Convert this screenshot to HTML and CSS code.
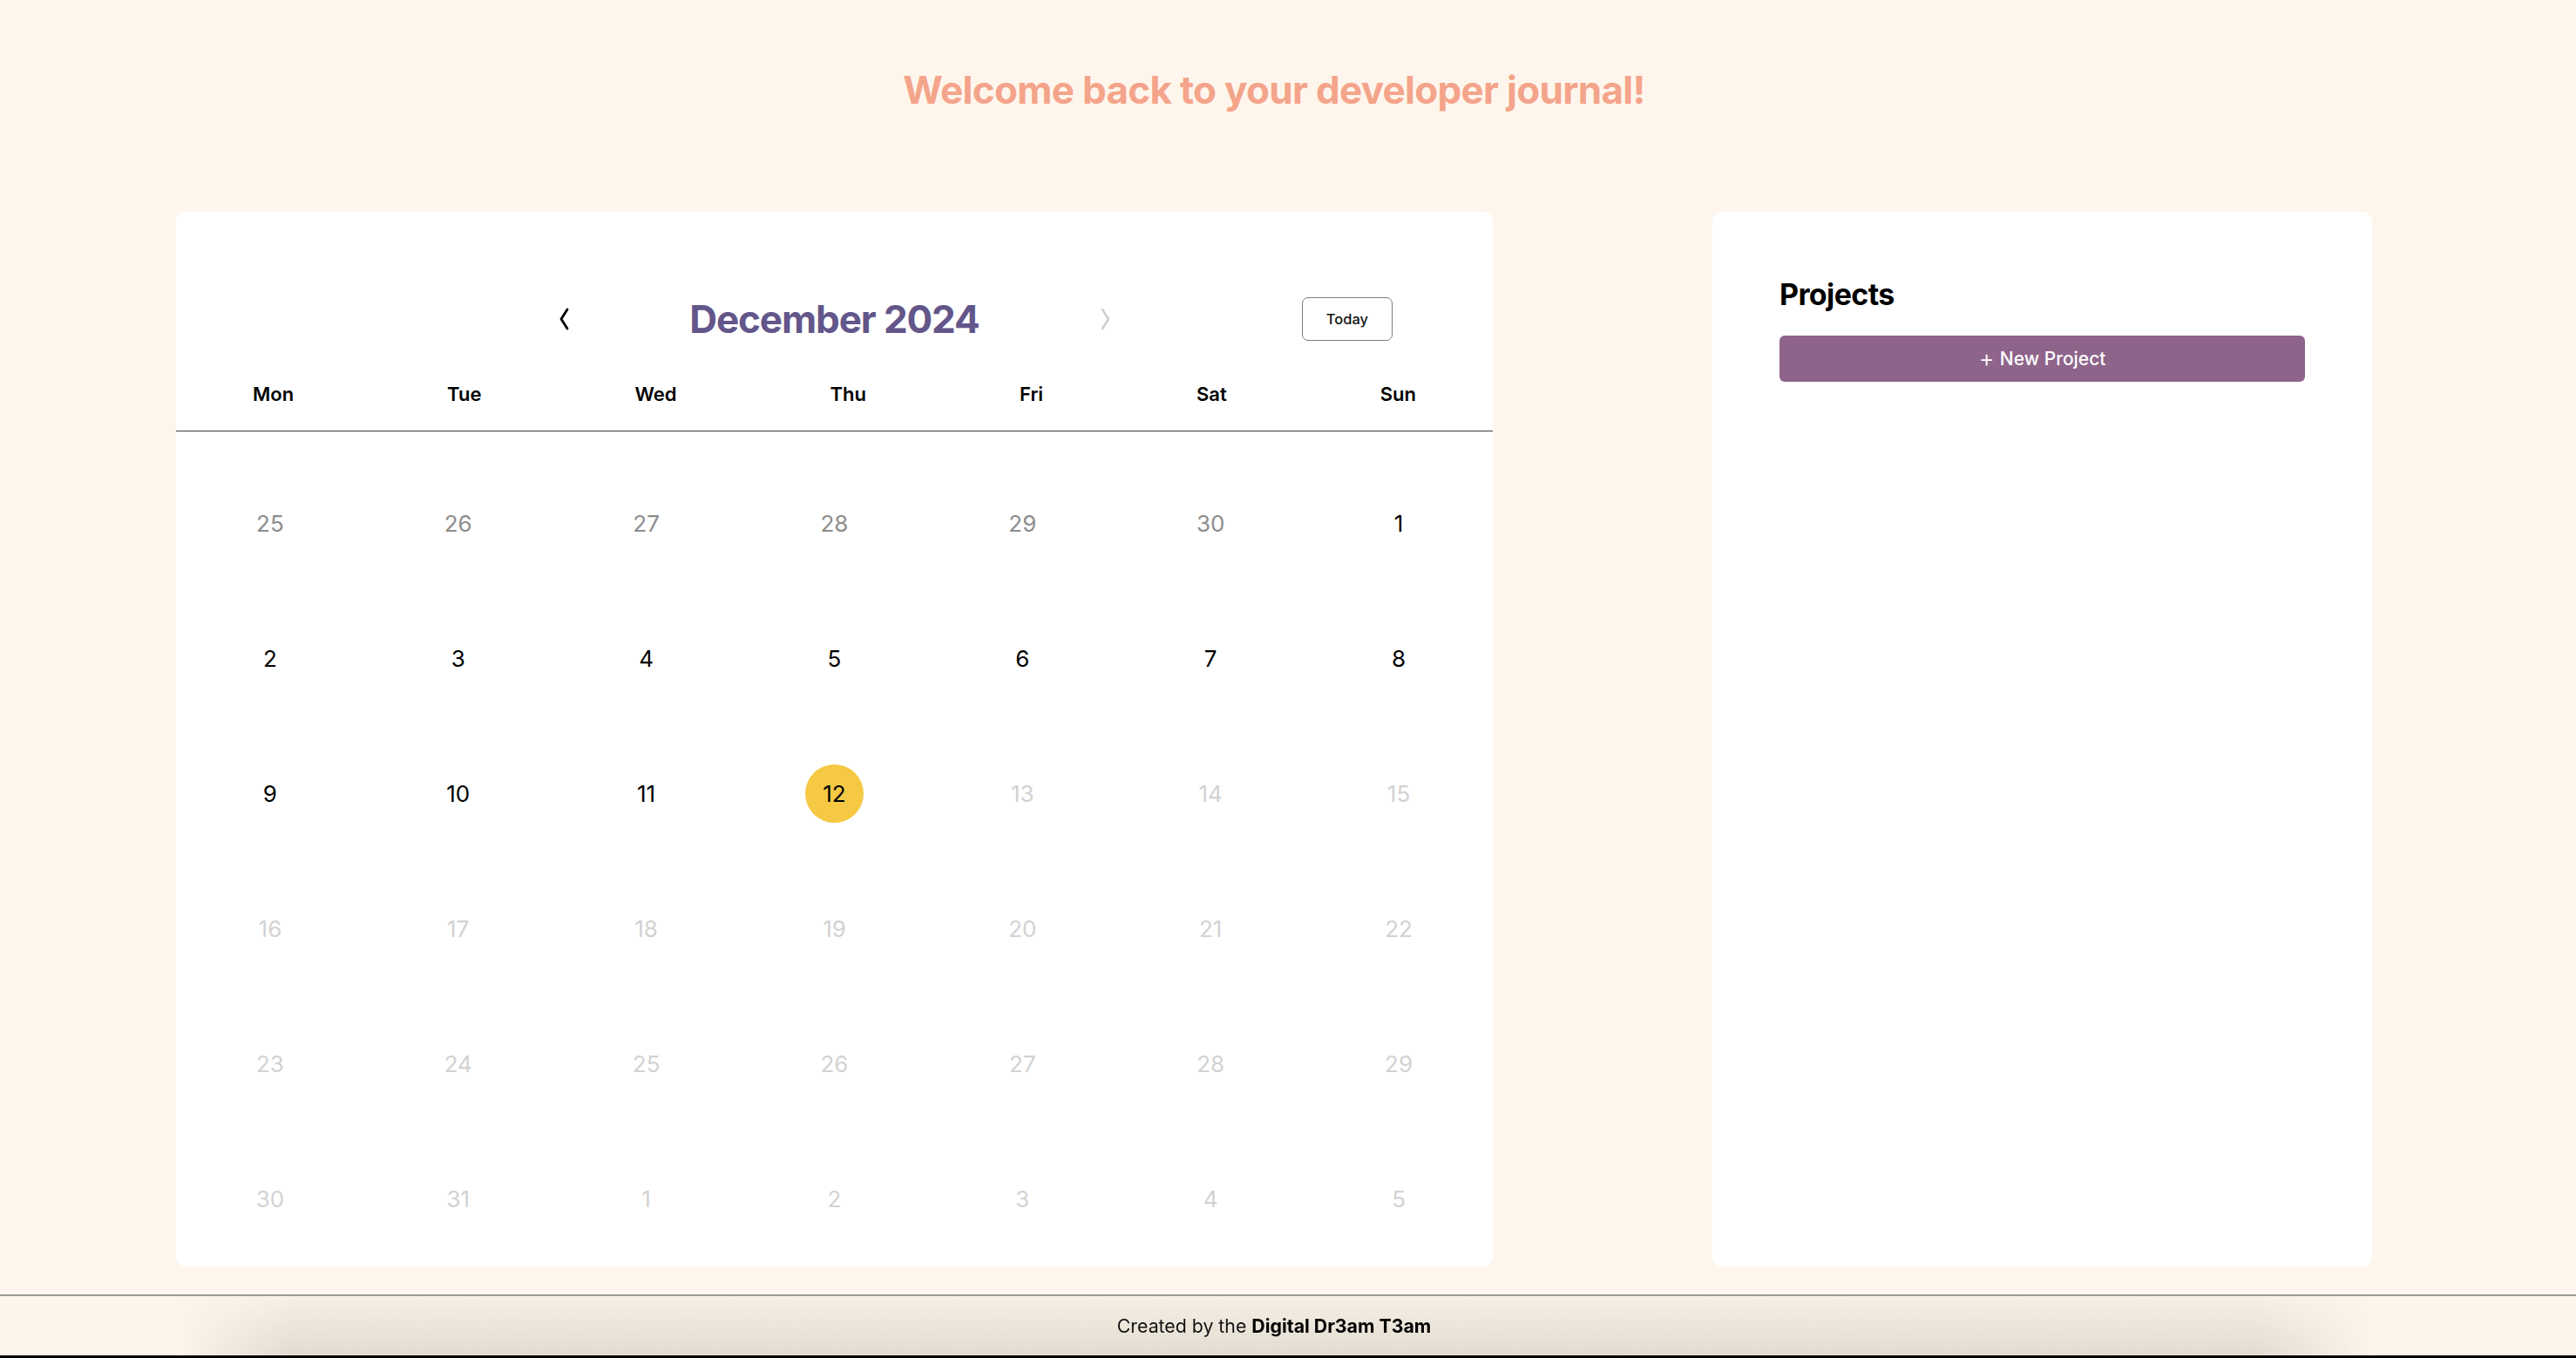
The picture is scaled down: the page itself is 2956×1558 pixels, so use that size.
FILE: index.html
```html
<!DOCTYPE html>
<html lang="en">
<head>
<meta charset="utf-8">
<title>Developer Journal</title>
<link rel="stylesheet" href="styles.css">
</head>
<body>
<header class="page-header">
  <h1 class="welcome">Welcome back to your developer journal!</h1>
</header>
<main class="layout">
  <section class="card calendar">
    <div class="cal-head">
      <div class="cal-nav">
        <button class="nav-btn prev" aria-label="Previous month">
          <svg width="16" height="28" viewBox="0 0 16 28"><polyline points="11,3 4,14 11,25" fill="none" stroke="#000" stroke-width="2.8" stroke-linecap="round" stroke-linejoin="round"/></svg>
        </button>
        <h2 class="month">December 2024</h2>
        <button class="nav-btn next" aria-label="Next month">
          <svg width="16" height="28" viewBox="0 0 16 28"><polyline points="5,3 12,14 5,25" fill="none" stroke="#cdcdcd" stroke-width="2.4" stroke-linecap="round" stroke-linejoin="round"/></svg>
        </button>
      </div>
      <div class="today-wrap"><button class="today-btn">Today</button></div>
    </div>
    <div class="weekdays">
      <span>Mon</span><span>Tue</span><span>Wed</span><span>Thu</span><span>Fri</span><span>Sat</span><span>Sun</span>
    </div>
    <div class="days">
      <div class="day other"><span>25</span></div>
      <div class="day other"><span>26</span></div>
      <div class="day other"><span>27</span></div>
      <div class="day other"><span>28</span></div>
      <div class="day other"><span>29</span></div>
      <div class="day other"><span>30</span></div>
      <div class="day"><span>1</span></div>
      <div class="day"><span>2</span></div>
      <div class="day"><span>3</span></div>
      <div class="day"><span>4</span></div>
      <div class="day"><span>5</span></div>
      <div class="day"><span>6</span></div>
      <div class="day"><span>7</span></div>
      <div class="day"><span>8</span></div>
      <div class="day"><span>9</span></div>
      <div class="day"><span>10</span></div>
      <div class="day"><span>11</span></div>
      <div class="day today"><span>12</span></div>
      <div class="day future"><span>13</span></div>
      <div class="day future"><span>14</span></div>
      <div class="day future"><span>15</span></div>
      <div class="day future"><span>16</span></div>
      <div class="day future"><span>17</span></div>
      <div class="day future"><span>18</span></div>
      <div class="day future"><span>19</span></div>
      <div class="day future"><span>20</span></div>
      <div class="day future"><span>21</span></div>
      <div class="day future"><span>22</span></div>
      <div class="day future"><span>23</span></div>
      <div class="day future"><span>24</span></div>
      <div class="day future"><span>25</span></div>
      <div class="day future"><span>26</span></div>
      <div class="day future"><span>27</span></div>
      <div class="day future"><span>28</span></div>
      <div class="day future"><span>29</span></div>
      <div class="day future"><span>30</span></div>
      <div class="day future"><span>31</span></div>
      <div class="day future"><span>1</span></div>
      <div class="day future"><span>2</span></div>
      <div class="day future"><span>3</span></div>
      <div class="day future"><span>4</span></div>
      <div class="day future"><span>5</span></div>
    </div>
  </section>
  <aside class="card projects">
    <h2 class="projects-title">Projects</h2>
    <button class="new-project"><span class="plus">+</span>New Project</button>
  </aside>
</main>
<footer class="footer">
  <div class="footer-shade">
    <p class="credit">Created by the <strong>Digital Dr3am T3am</strong></p>
  </div>
</footer>
</body>
</html>
```

FILE: styles.css
```css
* { box-sizing: border-box; }

html, body {
  margin: 0;
  padding: 0;
}

body {
  background: #fef6ec;
  font-family: Inter, "Noto Sans", "Liberation Sans", sans-serif;
  color: #000;
  height: 1558px;
  overflow: hidden;
  display: flex;
  flex-direction: column;
}

.page-header {
  padding-top: 81px;
  margin-bottom: 118px;
  text-align: center;
  padding-right: 32px;
}

.welcome {
  margin: 0;
  font-size: 44px;
  line-height: 44px;
  font-weight: 700;
  color: #f4a48a;
  letter-spacing: -0.7px;
}

.layout {
  display: grid;
  grid-template-columns: 1511px 757px;
  column-gap: 252px;
  padding-left: 202px;
  align-items: stretch;
  margin-bottom: 32px;
}

.card {
  background: #ffffff;
  border-radius: 11px;
}

/* Calendar */
.calendar {
  padding-top: 98px;
}

.cal-head {
  display: grid;
  grid-template-columns: 1fr 636px 1fr;
  align-items: center;
  height: 50px;
}

.cal-nav {
  grid-column: 2;
  display: flex;
  justify-content: space-between;
  align-items: center;
}

.nav-btn {
  background: none;
  border: none;
  padding: 0;
  width: 16px;
  height: 28px;
  display: flex;
  align-items: center;
  justify-content: center;
  cursor: pointer;
}

.month {
  margin: 0;
  font-size: 44px;
  line-height: 50px;
  font-weight: 700;
  color: #63568a;
  letter-spacing: -1.1px;
}

.today-wrap {
  grid-column: 3;
  display: flex;
  justify-content: flex-end;
  padding-right: 115px;
}

.today-btn {
  width: 104px;
  height: 50px;
  background: #fff;
  border: 1.5px solid #7d7d7d;
  border-radius: 7px;
  font-family: Inter, "Noto Sans", sans-serif;
  font-size: 16.5px;
  font-weight: 500;
  color: #111;
}

.weekdays {
  display: flex;
  justify-content: space-around;
  padding-top: 47px;
  padding-bottom: 28px;
  border-bottom: 1px solid #3a3a3a;
}

.weekdays span {
  font-size: 22px;
  line-height: 28px;
  font-weight: 600;
}

.days {
  display: grid;
  grid-template-columns: repeat(7, 1fr);
  grid-auto-rows: 155px;
  padding-top: 28px;
}

.day {
  display: flex;
  align-items: center;
  justify-content: center;
  font-size: 26px;
  font-weight: 400;
  color: #000;
}

.day span {
  width: 67px;
  height: 67px;
  border-radius: 50%;
  display: flex;
  align-items: center;
  justify-content: center;
}

.day.other { color: #8d8d8d; }
.day.future { color: #d2d2d2; }
.day.today span { background: #f5c944; color: #000; }

/* Projects */
.projects {
  padding: 74px 77px 0 77px;
}

.projects-title {
  margin: 0 0 27px 0;
  font-size: 34px;
  line-height: 41px;
  font-weight: 700;
  letter-spacing: -0.6px;
}

.new-project {
  width: 100%;
  height: 53px;
  border: none;
  border-radius: 6px;
  background: #8e648b;
  color: #fff;
  font-family: Inter, "Noto Sans", sans-serif;
  font-size: 21px;
  font-weight: 500;
  display: flex;
  align-items: center;
  justify-content: center;
}

.plus {
  font-size: 28px;
  font-weight: 300;
  margin-right: 6px;
  line-height: 1;
  position: relative;
  top: -1px;
}

/* Footer */
.footer {
  border-top: 2px solid #9d9b98;
  border-bottom: 3px solid #000;
  height: 73px;
  background: #fbf5ec;
}

.footer-shade {
  height: 68px;
  margin: 0 234px 0 202px;
  display: flex;
  align-items: center;
  justify-content: center;
  background: linear-gradient(to bottom, rgba(120, 100, 70, 0.03), rgba(90, 75, 45, 0.15));
  -webkit-mask-image: linear-gradient(to right, transparent 0, #000 130px, #000 calc(100% - 130px), transparent 100%);
  mask-image: linear-gradient(to right, transparent 0, #000 130px, #000 calc(100% - 130px), transparent 100%);
}

.credit {
  margin: 0;
  font-size: 21.3px;
  line-height: 28px;
  color: #111;
}

.credit strong {
  font-weight: 700;
  color: #000;
}
```
